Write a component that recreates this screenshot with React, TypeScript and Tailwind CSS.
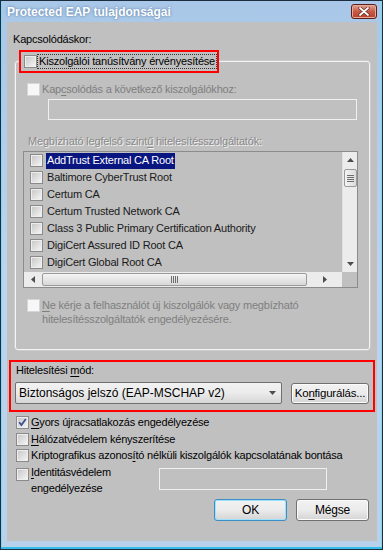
import React from "react";

function Box({ checked = false, disabled = false }: { checked?: boolean; disabled?: boolean }) {
  return (
    <span
      className={
        disabled
          ? "relative block w-[13px] h-[13px] shrink-0 border border-[#d6d6d6] bg-[#f7f7f7]"
          : "relative block w-[13px] h-[13px] shrink-0 border border-[#8a8a8a] bg-gradient-to-br from-[#c4c4c4] via-[#dedede] to-[#f7f7f7] shadow-[inset_0_0_0_1px_#eeeeee]"
      }
    >
      {checked && (
        <svg className="absolute left-0 top-0" width="11" height="11" viewBox="0 0 11 11">
          <path d="M2.2 5.3 L4.4 8 L8.8 2" fill="none" stroke="#3a4f8e" strokeWidth="1.8" />
        </svg>
      )}
    </span>
  );
}

function CloseBtn() {
  return (
    <div className="w-[26px] h-[15px] rounded-[3px] border border-[#5a1f16] bg-gradient-to-b from-[#e3a293] via-[#c75a45] to-[#b8402a] flex items-center justify-center shadow-[inset_0_0_0_1px_#e7a99b]">
      <svg width="12" height="9" viewBox="0 0 12 9">
        <path d="M2 1 L10 8 M10 1 L2 8" stroke="#5a2a20" strokeWidth="3.2" strokeLinecap="round" />
        <path d="M2 1 L10 8 M10 1 L2 8" stroke="#ffffff" strokeWidth="1.8" strokeLinecap="round" />
      </svg>
    </div>
  );
}

const items = [
  "AddTrust External CA Root",
  "Baltimore CyberTrust Root",
  "Certum CA",
  "Certum Trusted Network CA",
  "Class 3 Public Primary Certification Authority",
  "DigiCert Assured ID Root CA",
  "DigiCert Global Root CA",
];

function Tri({ dir }: { dir: "up" | "down" | "left" | "right" }) {
  const d =
    dir === "up"
      ? "M0 4 L3.5 0 L7 4 Z"
      : dir === "down"
      ? "M0 0 L7 0 L3.5 4 Z"
      : dir === "left"
      ? "M4 0 L4 7 L0 3.5 Z"
      : "M0 0 L4 3.5 L0 7 Z";
  const w = dir === "up" || dir === "down" ? 7 : 4;
  const h = dir === "up" || dir === "down" ? 4 : 7;
  return (
    <svg width={w} height={h} viewBox={`0 0 ${w} ${h}`}>
      <path d={d} fill="#4d4d4d" />
    </svg>
  );
}

export default function App() {
  return (
    <div className="w-[383px] h-[550px] bg-[#1d2d40] p-px font-['Liberation_Sans',Arial,sans-serif] text-[11px] leading-[13px] text-black">
      <div className="w-full h-full flex flex-col bg-gradient-to-b from-[#a9c7e8] via-[#bcd4ee] to-[#b9d2ec] pl-[6px] pr-[5px] pb-[6px] border-b-2 border-[#35bde9] shadow-[inset_1px_0_0_#7fd6f5,inset_-1px_0_0_#7fd6f5]">
        {/* title bar */}
        <div className="h-[21px] flex items-center justify-between">
          <span className="text-white font-bold text-[12px] leading-[14px] [text-shadow:0_0_3px_#5d80aa,0_0_1px_#7f9cc0]">
            Protected EAP tulajdonságai
          </span>
          <CloseBtn />
        </div>

        {/* client */}
        <div className="flex-1 bg-[#c0c0c0] flex flex-col tracking-[-0.2px]">
          <div className="mt-[11px] ml-[6px]">Kapcsolódáskor:</div>

          {/* group box */}
          <div className="mt-[15px] ml-[8px] w-[355px] h-[289px] border border-[#f4f4f4] rounded-[3px] flex flex-col shadow-[0_0_0_0.5px_#d8d8d8]">
            <div className="-mt-[12px] ml-[3px] self-start h-[23px] border-2 border-[#ff0000] bg-[#c0c0c0] flex items-center pl-[3px] pr-[1px]">
              <Box />
              <span className="ml-[1px] px-[1px] outline outline-1 outline-dotted outline-[#333]">
                Kiszolgálói tanúsítvány érvényesítése
              </span>
            </div>

            <div className="mt-[10px] ml-[11px] flex items-center text-[#7f7f7f]">
              <Box disabled />
              <span className="ml-[2px]">
                Kap<u className="underline-offset-2">c</u>solódás a következő kiszolgálókhoz:
              </span>
            </div>

            <div className="mt-[3px] ml-[32px] w-[309px] h-[21px] border border-[#f0f0f0]" />

            <div className="mt-[15px] ml-[12px] text-[#8a8a8a] [text-shadow:1px_1px_0_#f2f2f2]">
              Megbízható legfelső szint<u className="underline-offset-2">ű</u> hitelesítésszolgáltatók:
            </div>

            {/* list */}
            <div className="mt-[3px] ml-[7px] w-[335px] h-[137px] border border-[#8b8b8b] flex flex-col">
              <div className="flex h-[120px]">
                <div className="flex-1 flex flex-col overflow-hidden">
                  {items.map((t, i) => (
                    <div key={t} className="h-[17px] shrink-0 flex items-center pl-[6px] whitespace-nowrap">
                      <Box />
                      <span
                        className={
                          i === 0
                            ? "ml-[3px] h-[16px] flex items-center px-[1px] bg-[#0a1680] text-white"
                            : "ml-[3px] px-[1px] text-[#1a1a1a]"
                        }
                      >
                        {t}
                      </span>
                    </div>
                  ))}
                </div>
                {/* vertical scrollbar */}
                <div className="w-[15px] bg-[#ececec] flex flex-col items-center border-l border-[#e0e0e0]">
                  <div className="h-[16px] flex items-center justify-center">
                    <Tri dir="up" />
                  </div>
                  <div className="w-[13px] h-[18px] mt-[1px] rounded-[2px] border border-[#9a9a9a] bg-gradient-to-r from-[#f4f4f4] to-[#dcdcdc] flex flex-col items-center justify-center gap-[1px]">
                    <div className="w-[7px] h-px bg-[#6d6d6d]" />
                    <div className="w-[7px] h-px bg-[#6d6d6d]" />
                    <div className="w-[7px] h-px bg-[#6d6d6d]" />
                    <div className="w-[7px] h-px bg-[#6d6d6d]" />
                  </div>
                  <div className="flex-1" />
                  <div className="h-[16px] flex items-center justify-center">
                    <Tri dir="down" />
                  </div>
                </div>
              </div>
              {/* horizontal scrollbar */}
              <div className="flex flex-1">
                <div className="flex-1 bg-[#ececec] flex items-center">
                  <div className="w-[18px] flex justify-center">
                    <Tri dir="left" />
                  </div>
                  <div className="w-[265px] h-[13px] rounded-[2px] border border-[#9a9a9a] bg-gradient-to-b from-[#f4f4f4] to-[#d8d8d8] flex items-center justify-center gap-[1px]">
                    <div className="w-px h-[7px] bg-[#6d6d6d]" />
                    <div className="w-px h-[7px] bg-[#6d6d6d]" />
                    <div className="w-px h-[7px] bg-[#6d6d6d]" />
                    <div className="w-px h-[7px] bg-[#6d6d6d]" />
                  </div>
                  <div className="flex-1 flex justify-center">
                    <Tri dir="right" />
                  </div>
                </div>
                <div className="w-[15px] bg-[#c0c0c0]" />
              </div>
            </div>

            <div className="mt-[10px] ml-[11px] flex items-start text-[#7f7f7f] leading-[14px]">
              <div className="pt-[1px]">
                <Box disabled />
              </div>
              <span className="ml-[2px]">
                <u className="underline-offset-2">N</u>e kérje a felhasználót új kiszolgálók vagy megbízható
                <br />
                hitelesítésszolgáltatók engedélyezésére.
              </span>
            </div>
          </div>

          {/* auth method */}
          <div className="mt-[10px] ml-[2px] w-[366px] h-[52px] border-2 border-[#ff0000] flex flex-col pl-[4px]">
            <div className="mt-[2px] ml-[1px]">
              Hitelesítési <u className="underline-offset-2">m</u>ód:
            </div>
            <div className="mt-[5px] flex items-center">
              <div className="w-[267px] h-[22px] rounded-[2px] border border-[#707070] bg-gradient-to-b from-[#f2f2f2] via-[#ebebeb] to-[#d6d6d6] flex items-center pl-[3px] pr-[5px] text-[12px] tracking-normal">
                <span className="flex-1">Biztonságos jelszó (EAP-MSCHAP v2)</span>
                <Tri dir="down" />
              </div>
              <div className="ml-[9px] w-[78px] h-[21px] rounded-[3px] border border-[#707070] bg-gradient-to-b from-[#f2f2f2] via-[#ebebeb] to-[#d4d4d4] flex items-center justify-center text-[11.5px] shadow-[inset_0_0_0_1px_#fbfbfb]">
                Ko<u className="underline-offset-2">n</u>figurálás...
              </div>
            </div>
          </div>

          {/* options */}
          <div className="mt-[2px] ml-[9px] flex flex-col">
            <div className="h-[17px] flex items-center">
              <Box checked />
              <span className="ml-[2px]">
                <u className="underline-offset-2">G</u>yors újracsatlakozás engedélyezése
              </span>
            </div>
            <div className="h-[16px] flex items-center">
              <Box />
              <span className="ml-[2px]">
                <u className="underline-offset-2">H</u>álózatvédelem kényszerítése
              </span>
            </div>
            <div className="h-[17px] flex items-center">
              <Box />
              <span className="ml-[2px]">
                Kriptografikus azonos<u className="underline-offset-2">í</u>tó nélküli kiszolgálók kapcsolatának bontása
              </span>
            </div>
            <div className="flex items-start mt-[1px]">
              <div className="pt-[3px]">
                <Box />
              </div>
              <span className="ml-[2px] leading-[16px] -mt-[1px] w-[120px]">
                <u className="underline-offset-2">I</u>dentitásvédelem
                <br />
                engedélyezése
              </span>
              <div className="ml-[8px] w-[168px] h-[22px] border border-[#f0f0f0] mt-[3px]" />
            </div>
          </div>

          {/* buttons */}
          <div className="mt-[3px] flex justify-end pr-[8px] gap-[9px]">
            <div className="w-[73px] h-[22px] rounded-[3px] border border-[#3c8fc4] bg-gradient-to-b from-[#f2f2f2] via-[#ebebeb] to-[#d4d4d4] flex items-center justify-center text-[12px] shadow-[inset_0_0_0_1px_#9fe1fa]">
              OK
            </div>
            <div className="w-[73px] h-[22px] rounded-[3px] border border-[#707070] bg-gradient-to-b from-[#f2f2f2] via-[#ebebeb] to-[#d4d4d4] flex items-center justify-center text-[12px] shadow-[inset_0_0_0_1px_#fbfbfb]">
              Mégse
            </div>
          </div>
        </div>
      </div>
    </div>
  );
}
